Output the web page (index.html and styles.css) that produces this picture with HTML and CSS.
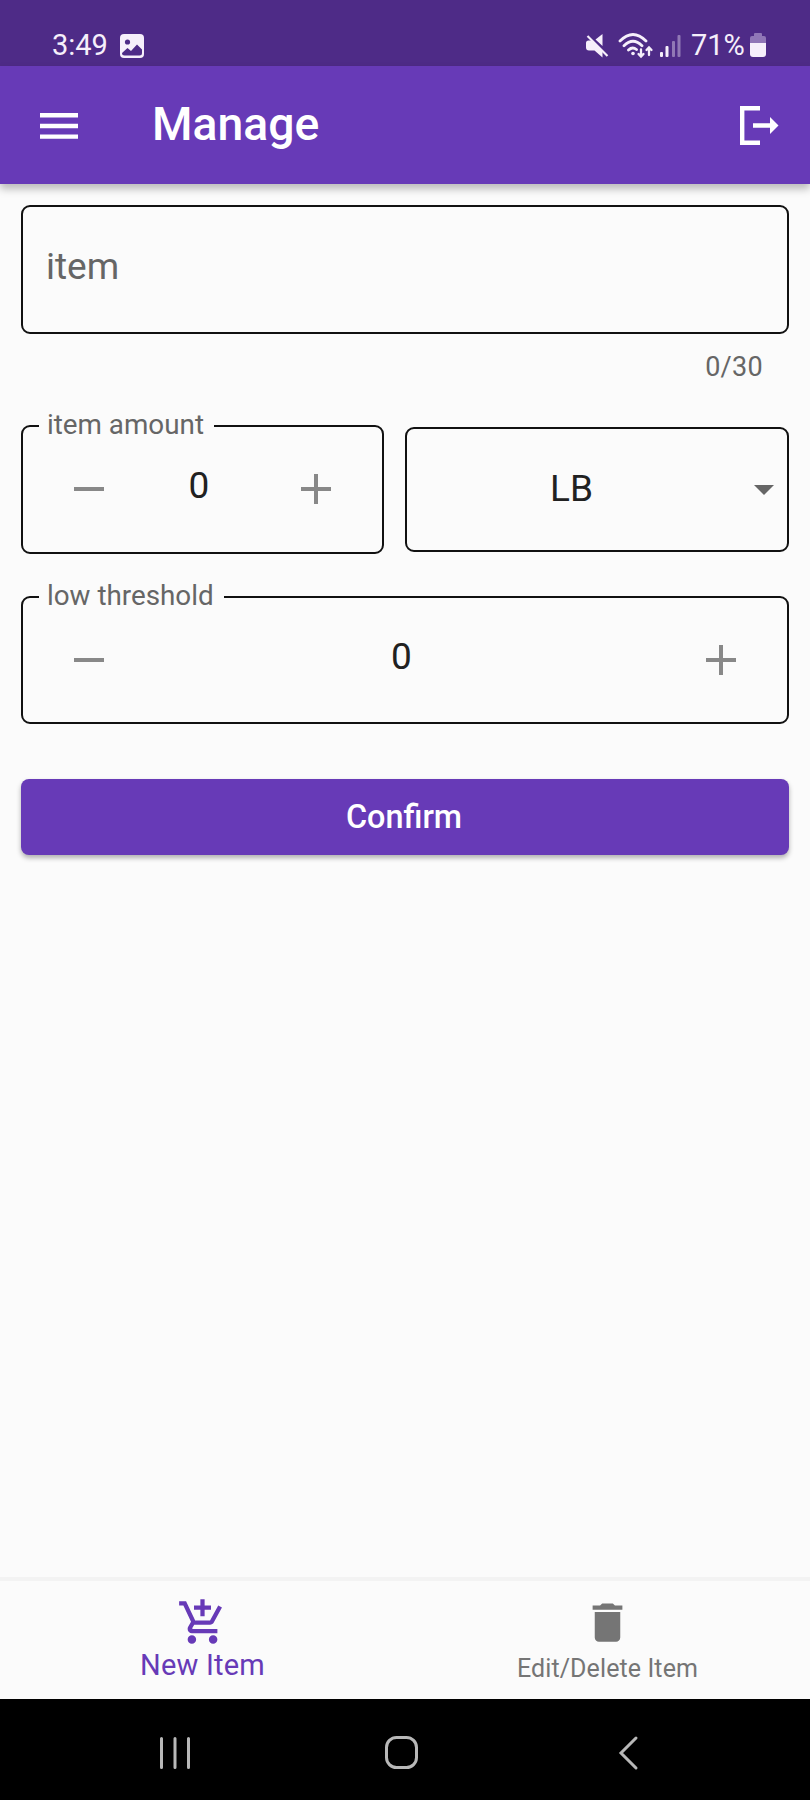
FILE: index.html
```html
<!DOCTYPE html>
<html lang="en">
<head>
<meta charset="utf-8">
<title>Manage</title>
<link rel="stylesheet" href="styles.css">
</head>
<body>
<div class="screen">
  <div class="status">
    <span class="clock">3:49</span>
    <svg class="photo" width="24" height="24" viewBox="0 0 24 24"><rect width="24" height="24" rx="4" fill="#f6effb"/><circle cx="7.5" cy="8" r="2.6" fill="#4e2b87"/><path d="M2 19l5.500-5 3.500 3 6-6.500 5 5V19q0 2.500-2.500 2.500h-15Q2 21.500 2 19z" fill="#4e2b87"/></svg>
    <svg class="signals" width="96" height="28" viewBox="0 0 96 28">
      <g fill="#f6effb"><path d="M0 10q0-2.500 2.500-2.500H6L16.500 18v6.500L8.500 17.500H3q-3 0-3-3zM9.500 6.500l7-5.500v12z"/><path d="M2.500 2l20 20" stroke="#4e2b87" stroke-width="2.200"/><path d="M1.500 3l20 20" stroke="#f6effb" stroke-width="2.200"/></g>
      <g fill="none" stroke="#f6effb" stroke-width="2.800" stroke-linecap="round"><path d="M34 8q13-13 26 0M38 12.800q9-9 18 0M42.500 17q4-3.800 8-.5"/><path d="M55 16.500v6.500M52.500 21l2.500 2.500 2.500-2.500M63 22v-7M60.500 17l2.500-2.500 2.500 2.500" stroke-width="2.300"/></g><circle cx="47" cy="20.500" r="1.800" fill="#f6effb"/>
      <g fill="#f6effb"><rect x="74" y="19" width="3" height="5" rx="1"/><rect x="79.500" y="13" width="3" height="11" rx="1"/><g opacity=".4"><rect x="86" y="8" width="3" height="16" rx="1"/><rect x="91.500" y="2" width="3" height="22" rx="1"/></g></g>
    </svg>
    <span class="percent">71%</span>
    <svg class="battery" width="16" height="24" viewBox="0 0 16 24"><path d="M0 10V5q0-2 2-2h2V1q0-1 1-1h6q1 0 1 1v2h2q2 0 2 2v5z" fill="#9076b7"/><path d="M0 10h16v11q0 3-3 3H3q-3 0-3-3z" fill="#f6effb"/></svg>
  </div>
  <header class="appbar">
    <svg class="menu" width="38" height="26" viewBox="0 0 38 26"><path d="M0 2.200h38M0 13h38M0 23.600h38" stroke="#fff" stroke-width="4.400"/></svg>
    <h1 class="title">Manage</h1>
    <svg class="logout" width="39" height="39" viewBox="0 0 39 39"><path d="M20 2.200H2.200v34.600H20M13 19.500h19" fill="none" stroke="#fff" stroke-width="4.400"/><path d="M30 11l8.500 8.500L30 28z" fill="#fff"/></svg>
  </header>
  <main class="form">
    <div class="field item"><span>item</span></div>
    <div class="counter">0/30</div>
    <div class="row">
      <fieldset class="field stepper"><legend>item amount</legend>
        <svg width="30" height="30" viewBox="0 0 30 30"><path d="M0 15h30" class="sign"/></svg><span class="value">0</span><svg width="30" height="30" viewBox="0 0 30 30"><path d="M0 15h30M15 0v30" class="sign"/></svg>
      </fieldset>
      <div class="field select"><span>LB</span><svg width="20" height="10" viewBox="0 0 20 10"><path d="M0 0h20L10 10z" fill="#666"/></svg></div>
    </div>
    <fieldset class="field stepper wide"><legend>low threshold</legend>
      <svg width="30" height="30" viewBox="0 0 30 30"><path d="M0 15h30" class="sign"/></svg><span class="value">0</span><svg width="30" height="30" viewBox="0 0 30 30"><path d="M0 15h30M15 0v30" class="sign"/></svg>
    </fieldset>
    <button class="confirm">Confirm</button>
  </main>
  <nav class="tabs">
    <div class="tab active"><svg width="51" height="51" viewBox="0 0 24 24"><path fill="currentColor" d="M11 9h2V6h3V4h-3V1h-2v3H8v2h3v3zm-4 9c-1.100 0-1.990.9-1.990 2S5.900 22 7 22s2-.9 2-2-.9-2-2-2zm10 0c-1.100 0-1.990.9-1.990 2s.89 2 1.990 2 2-.9 2-2-.9-2-2-2zm-9.830-3.250l.03-.12.900-1.630h7.450c.75 0 1.410-.41 1.750-1.030l3.860-7.010L19.420 4h-.01l-1.100 2-2.760 5H8.530l-.13-.27L6.160 6l-.95-2-.94-2H1v2h2l3.600 7.590-1.350 2.450c-.16.280-.25.610-.25.960 0 1.100.9 2 2 2h12v-2H7.420c-.13 0-.25-.11-.25-.25z"/></svg><span>New Item</span></div>
    <div class="tab"><svg width="51" height="51" viewBox="0 0 24 24"><path fill="currentColor" d="M6 19c0 1.100.9 2 2 2h8c1.100 0 2-.9 2-2V7H6v12zM19 4h-3.500l-1-1h-5l-1 1H5v2h14V4z"/></svg><span>Edit/Delete Item</span></div>
  </nav>
  <div class="system">
    <svg width="810" height="101" viewBox="0 0 810 101" fill="none" stroke="#b8b8b8" stroke-width="3" stroke-linecap="round"><path d="M161.500 39.500v29M175 39.500v29M188.500 39.500v29"/><rect x="386.500" y="38.500" width="30" height="30" rx="10"/><path d="M636 39l-15 15 15 15" stroke-linejoin="miter"/></svg>
  </div>
</div>
</body>
</html>
```
FILE: styles.css
```css
* { box-sizing: border-box; }
body { margin: 0; font-family: Roboto, sans-serif; background: #fbfbfb; }
svg { display: block; flex: none; }
.screen { width: 810px; height: 1800px; display: flex; flex-direction: column; overflow: hidden; }
.status { height: 66px; flex: none; background: #4e2b87; color: #f6effb; display: flex; align-items: flex-start; padding: 28px 44px 0 52px; font-size: 29px; line-height: 35px; }
.clock { width: 68px; }
.photo { margin-top: 6px; }
.signals { margin: 5px 9px 0 auto; }
.percent { width: 59px; white-space: nowrap; }
.battery { margin: 5px 0 0 0; }
.appbar { height: 118px; flex: none; display: flex; align-items: center; padding: 1px 31px 0 40px; background: #673ab7; color: #fff; box-shadow: 0 5px 8px rgba(0,0,0,.26); position: relative; }
.title { margin: -4px auto 0 74px; font-size: 46.300px; font-weight: 500; line-height: 54px; }
.form { flex: 1; padding: 21px 21px 0; }
.field { border: 2px solid #111; border-radius: 9px; margin: 0; font-size: 37px; color: #212121; }
.item { height: 129px; display: flex; align-items: center; padding: 0 23px 6px; color: #666; }
.counter { height: 40px; margin-top: 13px; padding-right: 26px; text-align: right; font-size: 27px; line-height: 40px; letter-spacing: .3px; color: #666; }
.row { display: flex; align-items: flex-start; gap: 21px; margin-top: 22px; }
.stepper { flex: none; width: 363px; height: 145px; padding: 0 51px 17px; display: flex; justify-content: space-between; align-items: center; }
.stepper legend { margin-left: -35px; padding: 0 10px 2px 8px; font-size: 27.800px; line-height: 32px; color: #666; }
.value { margin: -7px 7px 0 0; }
.sign { stroke: #888; stroke-width: 4; }
.select { flex: 1; height: 125px; margin-top: 18px; display: flex; align-items: center; padding: 0 13px 0 0; }
.select span { flex: 1; text-align: center; padding: 0 18px 2px 0; }
.wide { width: 768px; height: 144px; margin-top: 26px; padding-bottom: 16px; }
.confirm { display: block; width: 768px; height: 76px; margin-top: 55px; padding: 0 2px 0 0; border: 0; border-radius: 8px; background: #673ab7; color: #fff; font: 500 32.400px/38px Roboto, sans-serif; box-shadow: 0 3px 5px rgba(0,0,0,.3); }
.tabs { height: 119px; flex: none; display: flex; border-top: 1px solid #f3f3f3; box-shadow: 0 -3px 0 #f3f3f3; background: #fbfbfb; color: #757575; }
.tab { flex: 1; display: flex; flex-direction: column; align-items: center; padding-top: 16px; font-size: 25px; line-height: 41px; letter-spacing: .1px; }
.active { color: #673ab7; font-size: 29px; line-height: 35px; letter-spacing: .2px; }
.system { height: 101px; flex: none; background: #000; }
```
